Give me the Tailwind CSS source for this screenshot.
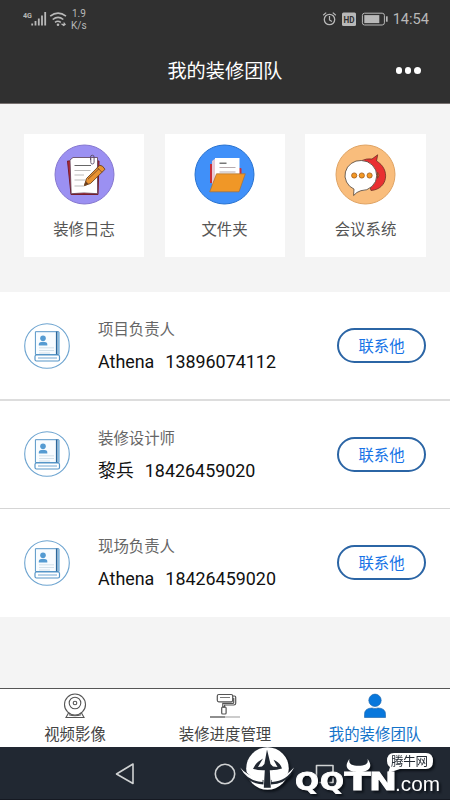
<!DOCTYPE html>
<html lang="zh-CN">
<head>
<meta charset="utf-8">
<meta name="viewport" content="width=450">
<title>我的装修团队</title>
<script src="https://cdn.jsdelivr.net/npm/@tailwindcss/browser@4"></script>
</head>
<body class="bg-[#f4f4f4]">
<svg class="hidden">
  <symbol id="book" viewBox="0 0 46 46">
    <circle cx="23" cy="23" r="22.3" fill="#fff" stroke="#6da4d0" stroke-width="1.1"/>
    <path d="M11.4 8.7h23.4v22.8H11.4z" fill="#f8fcff" stroke="#5796c8"/>
    <path d="M32.7 8.5v23" stroke="#2b679b" stroke-width="1.6"/>
    <path d="M34.8 9v22.5" stroke="#86b9df" stroke-width="1.5"/>
    <rect x="11" y="32" width="24.5" height="6" rx="1.5" fill="#fff" stroke="#5796c8" stroke-width="1.2"/>
    <path d="M14 35h19" stroke="#74a9d4"/>
    <circle cx="19" cy="15.3" r="2.8" fill="#559bd2"/>
    <path d="M14.8 22.4v-1.5c0-2.8 8.5-2.8 8.5 0v1.5z" fill="#559bd2"/>
    <path d="M15 24.8h15M15 27.5h15M15 30h11" stroke="#c9d9e5" stroke-width=".8"/>
  </symbol>
</svg>
<div class="flex h-[800px] w-[450px] flex-col overflow-hidden font-['Roboto','Noto_Sans_CJK_SC',sans-serif]">
  <header class="h-[104px] shrink-0 border-b border-[#77706f] bg-[#303030]">
    <div class="flex h-[38px] items-center justify-between pr-[21px] pl-[23px] text-[#b8b8b8]">
      <div class="flex items-center">
        <svg class="h-[24px] w-[45px]" viewBox="0 0 45 24">
          <text x="0" y="11" font-family="Roboto" font-size="8" font-weight="700" fill="currentColor" textLength="9" lengthAdjust="spacingAndGlyphs">4G</text>
          <path d="M9.2 18.5v-2M12.5 18.5v-4.5M15.8 18.5v-7M19 18.5V8.5M22.2 18.5V5" stroke="currentColor" stroke-width="1.8"/>
          <path d="M27.2 9.2q7.8-6.2 15.8 0M29.7 12.5q5.4-4.4 10.6 0M32 15.3q2.8-2 5.8 0" fill="none" stroke="currentColor" stroke-width="1.6"/>
          <circle cx="35" cy="17.7" r="1.3" fill="currentColor"/>
          <path d="M37.5 16.8h3.2v-2l2.3 2.6-2.3 1.9z" fill="currentColor"/>
        </svg>
        <div class="ml-[3px] pt-[1px] text-[10px] leading-[11.5px]"><div class="pl-px">1.9</div><div>K/s</div></div>
      </div>
      <div class="flex items-center">
        <svg class="mr-px h-[16px] w-[70px]" viewBox="0 0 70 16" fill="none" stroke="currentColor">
          <circle cx="9.5" cy="8.5" r="5.2" stroke-width="1.3"/><path d="M9.5 5v4l2.4 1.5M3.2 4.2l3-2.6M15.8 4.2l-3-2.6" stroke-width="1.2"/>
          <rect x="22" y="1.5" width="14" height="13.5" rx="1.5" fill="currentColor" stroke="none"/>
          <text x="23.5" y="11.7" font-family="Roboto" font-size="9" font-weight="700" fill="#303030" stroke="none" textLength="11" lengthAdjust="spacingAndGlyphs">HD</text>
          <rect x="42.4" y="2.2" width="22" height="11.8" rx="2.2" stroke-width="1"/>
          <rect x="44.3" y="4.1" width="15" height="8" fill="currentColor" stroke="none"/>
          <path d="M66.8 5.3v5.4" stroke-width="1.7"/>
        </svg>
        <span class="ml-[2px] pt-[2px] text-[14.6px]">14:54</span>
      </div>
    </div>
    <div class="relative flex h-[65px] items-center justify-center text-white">
      <h1 class="pt-[2px] text-[19.2px] leading-[30px]">我的装修团队</h1>
      <div class="absolute top-[29px] right-[29.5px] flex gap-[2.5px]"><i class="size-[6.6px] rounded-full bg-white"></i><i class="size-[6.6px] rounded-full bg-white"></i><i class="size-[6.6px] rounded-full bg-white"></i></div>
    </div>
  </header>

  <section class="flex h-[188px] shrink-0 justify-between px-6 pt-[30px] text-[15.4px] leading-6 text-[#555]">
    <div class="flex h-[123px] w-[120px] flex-col items-center bg-white pt-[10px]">
      <svg class="size-[61px]" viewBox="0 0 61 61">
        <circle cx="30.5" cy="30.5" r="29.5" fill="#9b90f2" stroke="#8577cf"/>
        <path d="M13.5 17h31.5l-1 33.5H17z" fill="#b52735" stroke="#751e2c"/>
        <path d="M16 16l3-2.5h24.5v36.2q-14-1.5-26.3 0z" fill="#fff" stroke="#5a3d53" stroke-width=".8"/>
        <path d="M20.5 26.5h16M20.5 31H30M20.5 36h11M20.5 42h10" stroke="#aaa" stroke-width=".8"/><path d="M20.5 21.5H37" stroke="#666"/>
        <path d="M36.5 16v-2.8q0-2 1.8-2t1.8 2v5q0 1.8-1.8 1.8-1.5 0-1.5-1.5V14" fill="none" stroke="#594a65" stroke-width=".9"/>
        <path d="M30.5 41.5l2-7L45.7 21.2q3 0 5.3 4.1L36.5 39.5z" fill="#e99332" stroke="#684122" stroke-width=".9"/>
        <path d="M43.3 23.6l4.6 4.6M34 35.2l11-10.5M30.5 41.5l1.3-4 2.3 2.5z" fill="#5c3925" stroke="#794a22" stroke-width=".9"/>
      </svg>
      <span class="mt-[13px]">装修日志</span>
    </div>
    <div class="flex h-[123px] w-[120px] flex-col items-center bg-white pt-[10px]">
      <svg class="size-[61px]" viewBox="0 0 61 61">
        <circle cx="30.5" cy="30.5" r="29.5" fill="#4090f9" stroke="#2872cf"/>
        <path d="M16 20h5v-2h2v6h23.5q1 0 1 1v14H16z" fill="#c82e39"/>
        <path d="M18 17l4-3v18l-4 12z" fill="#e8cbd5"/>
        <path d="M21 14h24.5v19H21z" fill="#fff"/>
        <path d="M25.5 19.2h7" stroke="#555" stroke-width="1.2"/><path d="M25.5 23.5h16M25.5 28h16" stroke="#b8abae"/>
        <path d="M22.5 29.8h28.8L45 47.8H15.7z" fill="#f09727" stroke="#a87034" stroke-width=".7"/>
      </svg>
      <span class="mt-[13px]">文件夹</span>
    </div>
    <div class="flex h-[123px] w-[121px] flex-col items-center bg-white pt-[10px]">
      <svg class="size-[61px]" viewBox="0 0 61 61">
        <circle cx="30.5" cy="30.5" r="29.5" fill="#f9bd7c" stroke="#dfa363"/>
        <path d="M27 16.5q4.5-2.2 10-1.5l5.7-4.2-1.2 6.2c14 8 11.7 28.2-5.5 29.5z" fill="#e92f31" stroke="#713226" stroke-width=".8"/>
        <path d="M26.3 16.5a15.7 15.1 0 1 1-.5 30.2q-4.2 1.2-7.2 4.8.2-4 .4-6.4A15.5 15 0 0 1 26.3 16.5z" fill="#fff" stroke="#4e4034" stroke-width=".8"/>
        <path d="M42.6 28.3q3 3 0 6z" fill="#c48233" stroke="#713226" stroke-width=".6"/>
        <g fill="#f39824" stroke="#a15c1d" stroke-width=".8"><circle cx="19.2" cy="31.5" r="2.6"/><circle cx="26.8" cy="31.5" r="2.6"/><circle cx="34.6" cy="31.5" r="2.6"/></g>
      </svg>
      <span class="mt-[13px]">会议系统</span>
    </div>
  </section>

  <main class="h-[325px] shrink-0 bg-white">
    <article class="flex h-[109px] items-center border-b-2 border-[#ddd] px-6">
      <svg class="size-[46px]"><use href="#book"/></svg>
      <div class="ml-7 flex-1 pt-px"><div class="text-[15.4px] leading-6 text-[#666]">项目负责人</div><div class="mt-[8px] flex gap-[11px] text-[17.9px] leading-6 text-[#111]"><span>Athena</span><span>13896074112</span></div></div>
      <button class="h-[35px] w-[89px] rounded-full border-2 border-[#2b65a5] pt-[3px] text-[15.4px] leading-6 text-[#1673e6]">联系他</button>
    </article>
    <article class="flex h-[108px] items-center border-b border-[#d5d5d5] px-6 pb-px">
      <svg class="size-[46px]"><use href="#book"/></svg>
      <div class="ml-7 flex-1 pt-px"><div class="text-[15.4px] leading-6 text-[#666]">装修设计师</div><div class="mt-[8px] flex gap-[11px] text-[17.9px] leading-6 text-[#111]"><span>黎兵</span><span>18426459020</span></div></div>
      <button class="h-[35px] w-[89px] rounded-full border-2 border-[#2b65a5] pt-[3px] text-[15.4px] leading-6 text-[#1673e6]">联系他</button>
    </article>
    <article class="flex h-[108px] items-center px-6 pb-px">
      <svg class="size-[46px]"><use href="#book"/></svg>
      <div class="ml-7 flex-1 pt-px"><div class="text-[15.4px] leading-6 text-[#666]">现场负责人</div><div class="mt-[8px] flex gap-[11px] text-[17.9px] leading-6 text-[#111]"><span>Athena</span><span>18426459020</span></div></div>
      <button class="h-[35px] w-[89px] rounded-full border-2 border-[#2b65a5] pt-[3px] text-[15.4px] leading-6 text-[#1673e6]">联系他</button>
    </article>
  </main>

  <nav class="mt-auto grid h-[59px] shrink-0 grid-cols-3 border-t border-[#555] bg-white text-[15.4px] leading-6 text-[#444]">
    <div class="flex flex-col items-center pt-[3px]">
      <svg class="h-[28px] w-[30px]" viewBox="0 0 30 28" fill="none" stroke="#555" stroke-width="1.1">
        <circle cx="15" cy="12.5" r="10.5"/><circle cx="15" cy="11" r="5.8"/><circle cx="15" cy="11" r="1.8"/><path d="M8.5 21L6 25.5h18L21.5 21M9 22.7q6 2 12 0"/>
      </svg><span class="mt-[3px]">视频影像</span>
    </div>
    <div class="flex flex-col items-center pt-[3px]">
      <svg class="h-[28px] w-[32px]" viewBox="0 0 32 28" fill="none" stroke="#555" stroke-width="1.2">
        <rect x="8.3" y="2.5" width="15.4" height="7.3" rx="1.5"/><path d="M11 5.5h10" stroke-width=".8"/><path d="M23.7 4h1.7q1.3 0 1.3 1.3v6q0 1.7-1.8 1.7h-9.3v2.2h-1.8V11.4h9.9q1 0 1-1V6"/><rect x="12.7" y="15" width="4.4" height="7" rx="1"/><path d="M1 25h15" stroke="#444"/><path d="M16 25h15" stroke="#aaa"/>
      </svg><span class="mt-[3px]">装修进度管理</span>
    </div>
    <div class="flex flex-col items-center pt-[3px] text-[#1473ca]">
      <svg class="h-[28px] w-[24px]" viewBox="0 0 24 28" fill="#0877dc" stroke="#1560a7" stroke-width=".6"><circle cx="12" cy="8.3" r="6.2"/><path d="M1.5 25.5v-3q0-6.5 7.5-6.5 3 1 6 0 7.5 0 7.5 6.5v3z"/></svg><span class="mt-[3px]">我的装修团队</span>
    </div>
  </nav>
  <footer class="relative h-[53px] shrink-0 border-b border-[#151922] bg-[#212832]">
    <svg class="block h-[53px] w-[450px]" viewBox="0 747 450 53">
      <g fill="none" stroke="#d0d2d3" stroke-width="1.6" stroke-linejoin="round"><path d="M116.5 774l16.5-10v19.5z"/><circle cx="225" cy="774" r="9.7"/><rect x="316.5" y="765.5" width="16.5" height="17"/></g>
    </svg>
    <svg class="absolute top-[-7px] left-[235px] h-[60px] w-[215px] drop-shadow-[2px_2px_1px_#0b1017]" viewBox="235 740 215 60">
      <circle cx="267.5" cy="768.5" r="21.3" fill="#fff"/>
      <path d="M244 769q7 10.500 19.500 11v4.500q-13-.5-20-10zM291 769q-7 10.500-20 11v4.500q13-.5 20.500-10z" fill="#212832"/>
      <path d="M267 749.500l-2.600 14.500-2.400 2.500-4 .5 5-8.500q-7.500 4-10 10.300 5.600 1.800 11.800 1.500l-1 17.500h7l-1-17.500q7 .2 12.200-1.800-1.500-5.500-8.500-8.800l4 7.300-4.500-.5-2.500-2.500z" fill="#212832"/>
      <path d="M240.200 767.500q7.500 9.400 22.500 11l-.2 3.500q-15.500-1-22.300-14.500zM294 767.500q-7.500 9.400-22.500 11l.2 3.500q15.500-1 22.300-14.500z" fill="#fff"/>
      <path d="M349.500 758.800c-6.500 8.700-1 13.400 9 13.400s15.500-4.700 9-13.400c1.500 5.800-3.500 7-9 7s-10.500-1.200-9-7z" fill="#fff"/>
      <g font-family="DejaVu Sans" font-size="24.500" font-weight="700" fill="#fff" stroke="#fff" stroke-width=".8">
        <text x="295" y="790" textLength="24" lengthAdjust="spacingAndGlyphs">Q</text>
        <text x="320" y="790" textLength="24" lengthAdjust="spacingAndGlyphs">Q</text>
        <text x="344.500" y="790" textLength="26" lengthAdjust="spacingAndGlyphs">T</text>
        <text x="369" y="790" textLength="28" lengthAdjust="spacingAndGlyphs">N</text>
      </g>
      <text x="395" y="790.500" font-family="Liberation Sans" font-size="20.500" fill="#fff" textLength="45" lengthAdjust="spacingAndGlyphs">.com</text>
      <path d="M394 753h32q7 0 7 8t-7 8h-26l-12 4 2-6q-3-2-3-6 0-8 7-8z" fill="#fff"/>
      <text x="391" y="766" font-family="Noto Sans CJK SC" font-size="12.500" fill="#252c35" textLength="37">腾牛网</text>
    </svg>
  </footer>
</div>
</body>
</html>
